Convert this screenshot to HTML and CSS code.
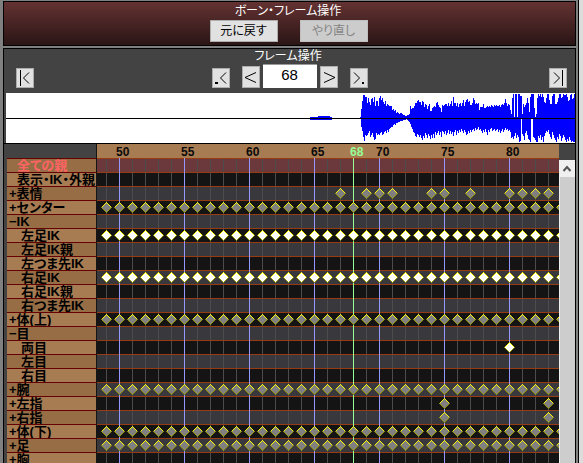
FILE: index.html
```html
<!DOCTYPE html>
<html lang="ja">
<head>
<meta charset="utf-8">
<title>ボーン・フレーム操作</title>
<link rel="stylesheet" href="styles.css">
</head>
<body>
<main class="workspace">
  <section class="panel history">
    <h2 class="title">ボーン・フレーム操作</h2>
    <div class="history-buttons">
      <button class="btn">元に戻す</button>
      <button class="btn" disabled>やり直し</button>
    </div>
  </section>
  <section class="panel frames">
    <h2 class="title">フレーム操作</h2>
    <div class="transport">
      <button class="step first" aria-label="最初のフレーム"><svg width="16" height="18"><path d="M3.500 1v16M12 3.500L6.500 9l5.500 5.500"/></svg></button>
      <div class="transport-center">
        <button class="step" aria-label="前のキー"><svg width="16" height="18"><path d="M13 3.500L7.500 9l5.500 5.500"/><path d="M2 13h3v2H2z" class="dot"/></svg></button>
        <div class="current">
          <button class="step tall" aria-label="前のフレーム"><svg width="16" height="20"><path d="M13 5.500L2 10.500l11 5"/></svg></button>
          <input class="frame-input" type="text" value="68" aria-label="フレーム">
          <button class="step tall" aria-label="次のフレーム"><svg width="16" height="20"><path d="M3 5.500l11 5-11 5"/></svg></button>
        </div>
        <button class="step" aria-label="次のキー"><svg width="16" height="18"><path d="M3 3.500L8.500 9 3 14.500"/><path d="M11 13h2v2h-2z" class="dot"/></svg></button>
      </div>
      <button class="step last" aria-label="最後のフレーム"><svg width="16" height="18"><path d="M12.500 1v16M4 3.500L9.500 9 4 14.500"/></svg></button>
    </div>
    <svg class="wave" id="wave" viewBox="0 0 569 50" preserveAspectRatio="none"></svg>
    <div class="timeline">
      <div class="sheet">
        <div class="ruler" id="ruler"></div>
        <div id="rows"></div>
      </div>
      <div class="scroll">
        <button class="scroll-up" aria-label="上へ"><svg width="14" height="17"><path d="M3.500 11L7 7l3.500 4"/></svg></button>
        <div class="thumb"></div>
      </div>
    </div>
  </section>
</main>
<div class="edge"></div>
<script src="timeline.js"></script>
</body>
</html>
```
FILE: styles.css
```css
* { box-sizing: border-box; }
body {
  margin: 0;
  height: 100vh;
  overflow: hidden;
  display: flex;
  background: #808080;
  font-family: "Liberation Sans", "Noto Sans CJK JP", sans-serif;
  font-feature-settings: "palt";
  font-size: 12px;
}
.workspace {
  flex: 1;
  min-width: 0;
  display: flex;
  flex-direction: column;
  gap: 2px;
  padding: 1px 2px 0 3px;
}
.edge { width: 5px; background: #dcdcdc; border-left: 1px solid #000; }
.panel { border: 1px solid #000; }
.history { height: 45px; background: linear-gradient(#643232, #2a1515); }
.frames {
  flex: 1;
  min-height: 0;
  overflow: hidden;
  border-bottom: 0;
  background: #434343;
}
.title {
  margin: 0;
  padding-right: 3px;
  color: #fff;
  font-size: 12px;
  font-weight: 400;
  line-height: 14px;
  text-align: center;
}
.history .title { line-height: 18px; }
.history-buttons { display: flex; justify-content: center; gap: 22px; padding-right: 2px; }
.btn {
  width: 68px;
  height: 22px;
  padding: 0;
  border: 1px solid #adadad;
  background: #e1e1e1;
  color: #000;
  font: inherit;
  line-height: 18px;
}
.btn:disabled { background: #ccc; border-color: #bfbfbf; color: #838383; }
.transport {
  display: grid;
  grid-template-columns: 1fr auto 1fr;
  align-items: end;
  height: 30px;
  padding-bottom: 5px;
}
.first { margin-left: 12px; }
.last { margin-right: 8px; justify-self: end; }
.transport-center { display: flex; gap: 12px; align-items: flex-end; }
.current { display: flex; gap: 3px; align-items: flex-end; }
.step {
  width: 18px;
  height: 20px;
  padding: 0;
  border: 1px solid #adadad;
  background: #e1e1e1;
}
.tall { height: 22px; }
.step svg { display: block; fill: none; stroke: #000; }
.step .dot { fill: #000; stroke: none; }
.frame-input {
  width: 54px;
  height: 24px;
  padding: 0 0 4px;
  border: 0;
  border-top: 1px solid #999;
  background: #fff;
  color: #000;
  font-family: "Liberation Sans", sans-serif;
  font-size: 15px;
  text-align: center;
}
.wave {
  display: block;
  width: calc(100% - 2px);
  height: 50px;
  margin-left: 2px;
  background: #fff;
  shape-rendering: crispEdges;
}
.timeline { display: flex; padding-left: 3px; border-top: 1px solid #000; }
.sheet { flex: 1; min-width: 0; }
.ruler {
  position: relative;
  display: flex;
  height: 14px;
  margin-left: 89px;
  padding-left: 19px;
  overflow: hidden;
  border-left: 1px solid #141414;
  background: #a87c52;
  color: #0a0a0a;
  font-weight: 700;
  line-height: 16px;
}
.ruler span { flex: 0 0 65px; }
.ruler .now { position: absolute; top: 0; color: #96ff96; }
.row { display: flex; height: 14px; }
.label {
  flex: 0 0 89px;
  padding-left: 2px;
  overflow: hidden;
  border-top: 1px solid #640000;
  background: #976d45;
  color: #000;
  font-size: 13px;
  font-weight: 700;
  line-height: 14px;
  white-space: nowrap;
}
.row:nth-child(even) .label { background: #a87c52; }
.label.leaf { padding-left: 10px; }
.label.child { padding-left: 14px; }
.row:first-child .label { color: #ff6464; }
.lane {
  flex: 1;
  min-width: 0;
  height: 14px;
  overflow: hidden;
  border-left: 1px solid #141414;
  background: #39383c;
  shape-rendering: crispEdges;
}
.row:nth-child(even) .lane { background: #141414; }
.row:first-child .lane { background: #6b383c; }
.tick { fill: #4c4c4c; }
.rule { fill: #963c14; }
.five { fill: #9696ff; }
.cursor { fill: #96ff96; }
.key { fill: #808080; }
.key.on { fill: #fff; }
.lit { fill: none; stroke: #ffff00; }
.shade { fill: none; stroke: #969600; }
.scroll {
  width: 16px;
  display: flex;
  flex-direction: column;
  margin-top: 16px;
  border-left: 1px solid #f0f0f0;
}
.scroll-up { height: 17px; padding: 0; border: 0; background: #f0f0f0; }
.scroll-up svg { display: block; fill: none; stroke: #555; stroke-width: 2; }
.thumb { flex: 1; background: #cdcdcd; }
```
FILE: timeline.js
```js
const FIRST = 49, LAST = 84, STEP = 13, NOW = 68;
const all = Array.from({ length: LAST - FIRST + 1 }, (_, i) => FIRST + i);

// label, kind, key frames, highlighted keys
const rows = [
  ['全ての親', 'leaf'],
  ['表示・IK・外親', 'leaf'],
  ['+表情', '', [67, 69, 70, 71, 74, 75, 77, 80, 81, 82, 83]],
  ['+センター', '', all],
  ['−IK', ''],
  ['左足IK', 'child', all, true],
  ['左足IK親', 'child'],
  ['左つま先IK', 'child'],
  ['右足IK', 'child', all, true],
  ['右足IK親', 'child'],
  ['右つま先IK', 'child'],
  ['+体(上)', '', all],
  ['−目', ''],
  ['両目', 'child', [80], true],
  ['左目', 'child'],
  ['右目', 'child'],
  ['+腕', '', all],
  ['+左指', '', [75, 83]],
  ['+右指', '', [75, 83]],
  ['+体(下)', '', all],
  ['+足', '', all],
  ['+胸', '']
];

const xOf = frame => 9 + (frame - FIRST) * STEP;

function lane(keys = [], on) {
  let ticks = '', marks = '', lines = '';
  for (const f of all) {
    const x = xOf(f);
    if (f === NOW || f % 5 === 0) {
      lines += `<rect class="${f === NOW ? 'cursor' : 'five'}" x="${x}" width="1" height="14"/>`;
    } else {
      ticks += `<rect class="tick" x="${x}" width="1" height="14"/>`;
    }
  }
  for (const f of keys) {
    const c = xOf(f) + 0.5;
    marks += `<path class="key${on ? ' on' : ''}" d="M${c - 5} 7.500l5-5 5 5-5 5z"/>` +
      `<path class="shade" d="M${c + 5} 7.500l-5 5-5-5"/>` +
      `<path class="lit" d="M${c - 5} 7.500l5-5 5 5"/>`;
  }
  return `<svg class="lane">${ticks}<rect class="rule" width="100%" height="1"/>${lines}${marks}</svg>`;
}

document.getElementById('rows').innerHTML = rows.map(([name, kind, keys, on]) =>
  `<div class="row"><div class="label ${kind}">${name}</div>${lane(keys, on)}</div>`).join('');

document.getElementById('ruler').innerHTML =
  all.filter(f => f % 5 === 0).map(f => `<span>${f}</span>`).join('') +
  `<span class="now" style="left:${xOf(NOW) - 3}px">${NOW}</span>`;

// Amplitudes above and below the axis, one per column, from column 354
const up = [1,9,17,23,23,21,21,15,20,16,13,19,20,16,21,12,17,17,12,20,22,18,20,16,14,17,12,14,13,12,12,12,8,9,7,8,5,6,5,4,5,5,4,3,3,2,2,3,3,4,
12,9,10,10,12,15,15,17,18,16,16,13,17,16,11,14,13,9,12,14,7,7,10,11,12,11,15,16,13,11,10,6,13,12,13,14,14,12,15,12,14,17,12,21,15,15,12,15,11,14,15,12,15,18,12,
16,18,19,16,17,13,13,15,20,18,14,15,14,15,8,11,11,11,14,10,10,11,12,11,12,11,13,12,11,13,12,13,12,12,13,11,13,14,13,15,19,15,12,14,13,8,4,
20,24,1,24,24,1,24,24,22,22,4,14,11,13,15,20,15,6,21,24,24,24,10,1,4,20,24,22,24,21,24,21,16,15,20,24,24,18,14,14,22,24,24,14,14,16,20,24,24,20,21,24,23,23,24,21,17,18,23,24,19,20,24];
const down = [1,9,13,19,23,17,18,17,15,13,19,17,15,19,22,21,15,17,16,17,15,14,17,16,14,13,15,12,14,11,10,9,9,7,6,7,5,5,4,4,3,3,3,2,2,2,1,2,3,4,
6,9,11,14,15,18,19,16,17,19,17,20,22,18,20,15,17,20,16,18,21,17,20,16,20,14,17,15,13,17,14,19,13,14,16,13,17,15,12,16,13,16,14,18,14,12,17,13,15,12,14,11,13,15,12,
14,17,16,13,15,12,14,12,11,13,10,12,11,9,12,11,13,15,12,14,11,14,17,12,14,11,10,13,12,11,13,12,11,14,12,15,13,11,14,12,10,12,11,13,12,14,20,
19,21,18,15,20,17,19,24,23,1,16,18,22,15,13,17,21,22,24,1,1,19,20,22,24,24,18,20,17,22,19,24,18,15,13,14,12,16,19,21,14,17,20,22,24,19,21,16,18,23,20,17,19,22,24,21,23,19,22,24,23,24,24];
let bars = '';
up.forEach((h, i) => { bars += `M${354 + i} ${25 - h}h1v${h + (down[i] || 20)}h-1z`; });
document.getElementById('wave').innerHTML =
  `<path fill="#00f" d="${bars}M304 24h22v3h-22zM312 23h12v4h-12z"/><rect y="25" width="569" height="1"/>`;
```
